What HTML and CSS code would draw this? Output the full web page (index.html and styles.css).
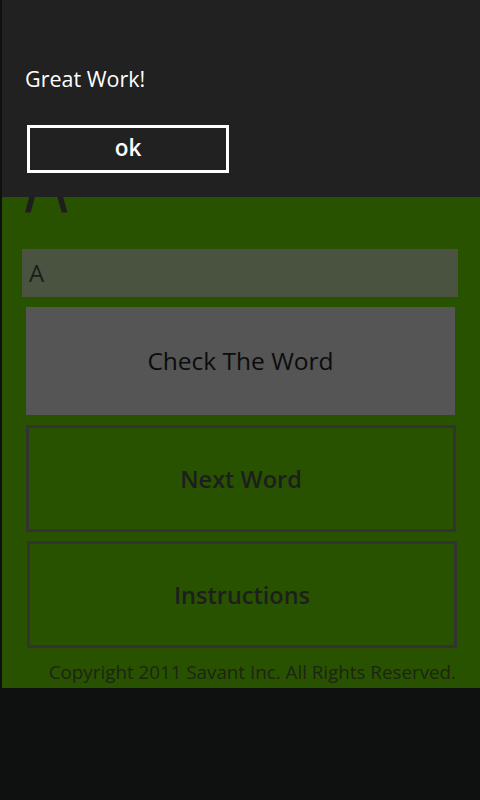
FILE: index.html
```html
<!DOCTYPE html>
<html>
<head>
<meta charset="utf-8">
<link rel="stylesheet" href="styles.css">
</head>
<body>
<div class="screen">
  <div class="app">
    <div class="big-letter">A</div>
    <div class="textbox">A</div>
    <div class="btn btn-filled">Check The Word</div>
    <div class="btn btn-outline">Next Word</div>
    <div class="btn btn-outline">Instructions</div>
    <div class="copyright">Copyright 2011 Savant Inc. All Rights Reserved.</div>
  </div>
  <div class="dialog">
    <div class="dialog-msg">Great Work!</div>
    <div class="dialog-btn">ok</div>
  </div>
</div>
</body>
</html>
```
FILE: styles.css
```css
html, body {
  margin: 0;
  padding: 0;
  background: #0f1010;
}
body {
  width: 480px;
  height: 800px;
  overflow: hidden;
  font-family: "Open Sans", "Noto Sans", sans-serif;
}
.screen {
  position: relative;
  width: 480px;
  height: 800px;
}
.app {
  margin-left: 2px;
  width: 478px;
  height: 688px;
  background: #285200;
  display: flex;
  flex-direction: column;
  box-sizing: border-box;
  padding-top: 128px;
}
.big-letter {
  font-size: 96px;
  line-height: 96px;
  height: 96px;
  font-weight: 400;
  color: #1e1e1e;
  margin-left: 23px;
  transform: scaleX(0.7);
  transform-origin: left center;
}
.textbox {
  margin-top: 25px;
  margin-left: 20px;
  width: 436px;
  height: 48px;
  background: #4a5340;
  color: #1c1c1c;
  font-size: 24px;
  line-height: 48px;
  padding-left: 7px;
  box-sizing: border-box;
}
.btn {
  margin-left: 24px;
  width: 430px;
  height: 108px;
  box-sizing: border-box;
  display: flex;
  align-items: center;
  justify-content: center;
  font-size: 24px;
  color: #101010;
}
.btn-filled {
  margin-top: 10px;
  background: #545554;
  width: 429px;
  font-size: 24.5px;
  font-weight: 500;
  color: #0c0c0c;
  padding-bottom: 1px;
}
.btn-outline {
  border: 3px solid #333333;
  margin-top: 10px;
  height: 107px;
  font-weight: 600;
  font-size: 23.5px;
  color: #1e1e1e;
  padding-bottom: 0;
}
.btn-outline + .btn-outline {
  margin-top: 9px;
  margin-left: 25px;
}
.copyright {
  margin-top: 11px;
  padding-right: 24px;
  text-align: right;
  font-size: 18.8px;
  line-height: 26px;
  color: #1c2514;
}
.dialog {
  position: absolute;
  top: 0;
  left: 2px;
  right: 0;
  height: 197px;
  background: #212121;
  box-sizing: border-box;
  padding-top: 63px;
  padding-left: 23px;
}
.dialog-msg {
  color: #ffffff;
  font-size: 21.5px;
  line-height: 32px;
}
.dialog-btn {
  margin-top: 30px;
  margin-left: 2px;
  width: 202px;
  height: 48px;
  border: 3px solid #ffffff;
  box-sizing: border-box;
  color: #ffffff;
  font-size: 22.5px;
  font-weight: 600;
  display: flex;
  align-items: center;
  justify-content: center;
  padding-bottom: 3px;
}
```
